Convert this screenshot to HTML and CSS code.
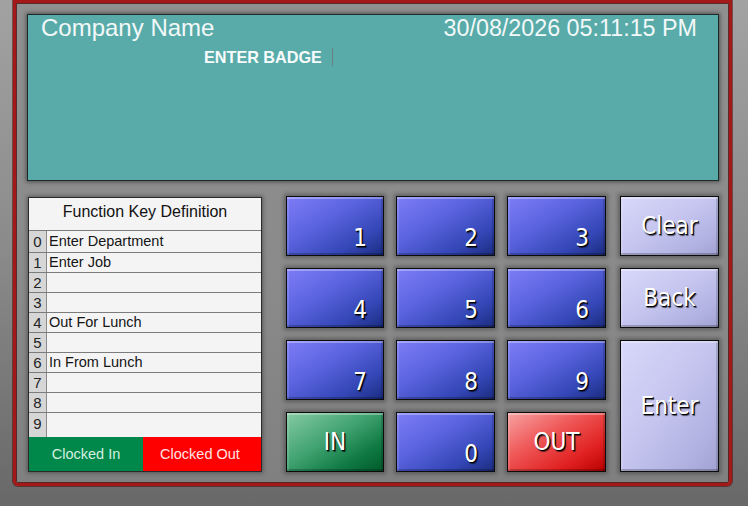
FILE: index.html
```html
<!DOCTYPE html>
<html>
<head>
<meta charset="utf-8">
<link rel="stylesheet" href="styles.css">
</head>
<body>
<div class="frame">
  <div class="display">
    <div class="display-top">
      <span class="company">Company Name</span>
      <span class="clock">30/08/2026 05:11:15 PM</span>
    </div>
    <div class="badge-row">
      <span class="badge-label">ENTER BADGE</span>
      <span class="cursor"></span>
    </div>
  </div>
  <div class="lower">
    <div class="fkeys">
      <div class="fk-title">Function Key Definition</div>
      <div class="fk-rows">
        <div class="fk-row first"><span class="fk-num">0</span><span class="fk-text">Enter Department</span></div>
        <div class="fk-row"><span class="fk-num">1</span><span class="fk-text">Enter Job</span></div>
        <div class="fk-row"><span class="fk-num">2</span><span class="fk-text"></span></div>
        <div class="fk-row"><span class="fk-num">3</span><span class="fk-text"></span></div>
        <div class="fk-row"><span class="fk-num">4</span><span class="fk-text">Out For Lunch</span></div>
        <div class="fk-row"><span class="fk-num">5</span><span class="fk-text"></span></div>
        <div class="fk-row"><span class="fk-num">6</span><span class="fk-text">In From Lunch</span></div>
        <div class="fk-row"><span class="fk-num">7</span><span class="fk-text"></span></div>
        <div class="fk-row"><span class="fk-num">8</span><span class="fk-text"></span></div>
        <div class="fk-row last"><span class="fk-num">9</span><span class="fk-text"></span></div>
      </div>
      <div class="status">
        <div class="st st-in">Clocked In</div>
        <div class="st st-out">Clocked Out</div>
      </div>
    </div>
    <div class="keypad">
      <div class="key num">1</div>
      <div class="key num">2</div>
      <div class="key num">3</div>
      <div class="key lav">Clear</div>
      <div class="key num">4</div>
      <div class="key num">5</div>
      <div class="key num">6</div>
      <div class="key lav">Back</div>
      <div class="key num">7</div>
      <div class="key num">8</div>
      <div class="key num">9</div>
      <div class="key lav enter">Enter</div>
      <div class="key green">IN</div>
      <div class="key num">0</div>
      <div class="key red">OUT</div>
    </div>
  </div>
</div>
</body>
</html>
```
FILE: styles.css
```css
html, body {
  margin: 0;
  padding: 0;
}
body {
  width: 748px;
  height: 506px;
  overflow: hidden;
  background: linear-gradient(to bottom, #a2a2a2 0%, #8a8a8a 50%, #686868 100%);
  font-family: "Liberation Sans", Arial, sans-serif;
}
.frame {
  box-sizing: border-box;
  margin-left: 13px;
  width: 719px;
  height: 486px;
  border: 3px solid #a41818;
  border-radius: 0 0 5px 5px;
  box-shadow: inset 0 0 0 1px rgba(70,0,0,.7), 0 0 0 1px rgba(70,0,0,.5);
  background: linear-gradient(to bottom, #909090 0%, #8a8a8a 60%, #808080 100%);
  padding: 11px 10px 0 11px;
}
.display {
  box-sizing: border-box;
  width: 692px;
  height: 167px;
  background: #58aba9;
  border: 1px solid #1e2a2a;
  box-shadow: 0 0 4px 1px rgba(30,30,30,.55);
  padding: 0 21px 0 13px;
  color: #f2f8f8;
}
.display-top {
  display: flex;
  justify-content: space-between;
  height: 26px;
  line-height: 26px;
}
.company {
  font-size: 24px;
}
.clock {
  font-size: 23.3px;
}
.badge-row {
  display: flex;
  align-items: center;
  margin-top: 7px;
  padding-left: 163px;
  height: 18px;
}
.badge-label {
  font-size: 16.2px;
  font-weight: bold;
  line-height: 18px;
  color: #f8fbfb;
}
.cursor {
  width: 1px;
  height: 18px;
  margin-left: 10px;
  background: #6c807f;
}
.lower {
  display: flex;
  margin-top: 15px;
  margin-left: 1px;
}
.fkeys {
  box-sizing: border-box;
  width: 234px;
  height: 275px;
  margin-top: 1px;
  border: 1px solid #2a2a2a;
  background: #f4f4f4;
  box-shadow: 0 0 4px 1px rgba(30,30,30,.45);
  display: flex;
  flex-direction: column;
}
.fk-title {
  height: 28px;
  padding-bottom: 4px;
  line-height: 28px;
  text-align: center;
  font-size: 16px;
  color: #111;
}
.fk-rows {
  display: flex;
  flex-direction: column;
  flex: 1;
}
.fk-row {
  box-sizing: border-box;
  display: flex;
  height: 20px;
  border-top: 1px solid #7c7c7c;
  font-size: 14.5px;
  line-height: 19px;
  color: #151515;
}
.fk-row.first {
  height: 22px;
  line-height: 21px;
}
.fk-row.last {
  flex: 1;
  line-height: 22px;
}
.fk-num {
  box-sizing: border-box;
  width: 18px;
  background: #d6d6d6;
  border-right: 1px solid #8a8a8a;
  text-align: center;
  font-size: 15px;
  color: #222;
}
.fk-text {
  padding-left: 2px;
}
.status {
  display: flex;
  height: 34px;
}
.st {
  flex: 1;
  display: flex;
  align-items: center;
  justify-content: center;
  font-size: 14.5px;
}
.st-in {
  background: #00884a;
  color: #d6efe0;
}
.st-out {
  background: #fe0000;
  color: #ffe4e4;
  padding-right: 4px;
}
.keypad {
  margin-left: 24px;
  display: grid;
  grid-template-columns: 98px 99px 99px 101px;
  grid-template-rows: 60px 60px 60px 60px;
  column-gap: 12px;
  row-gap: 12px;
}
.key {
  box-sizing: border-box;
  display: flex;
  align-items: center;
  justify-content: center;
  border: 1px solid #0c0c0c;
  font-family: "DejaVu Sans Condensed", "DejaVu Sans", sans-serif;
  font-size: 24px;
  line-height: 24px;
  color: #fff;
  text-shadow: 1px 1px 0 #000, 1.5px 1.5px 1px rgba(0,0,0,.6);
  box-shadow: 0 0 4px 2px rgba(45,45,45,.45),
    inset 0 2px 0 rgba(255,255,255,.3),
    inset 2px 0 0 rgba(255,255,255,.12),
    inset 0 -2px 0 rgba(0,0,0,.22),
    inset -2px 0 0 rgba(0,0,0,.15);
}
.num {
  justify-content: flex-end;
  align-items: flex-end;
  padding: 0 16px 5px 0;
  background: linear-gradient(to bottom right, #7d7df7 0%, #5b63df 40%, #3447b6 75%, #1b2c80 100%);
}
.lav {
  grid-column: 4;
  justify-self: end;
  width: 99px;
  background: linear-gradient(to bottom right, #d8d8fa 0%, #c6c6f0 45%, #b2b2e2 80%, #a2a2d2 100%);
}
.enter {
  grid-row: span 2;
}
.green {
  background: linear-gradient(to bottom right, #86caa4 0%, #3fa270 45%, #107a44 75%, #005a2a 100%);
}
.red {
  background: linear-gradient(to bottom right, #f7a2a2 0%, #ef5656 40%, #e02020 75%, #b80000 100%);
}
```
